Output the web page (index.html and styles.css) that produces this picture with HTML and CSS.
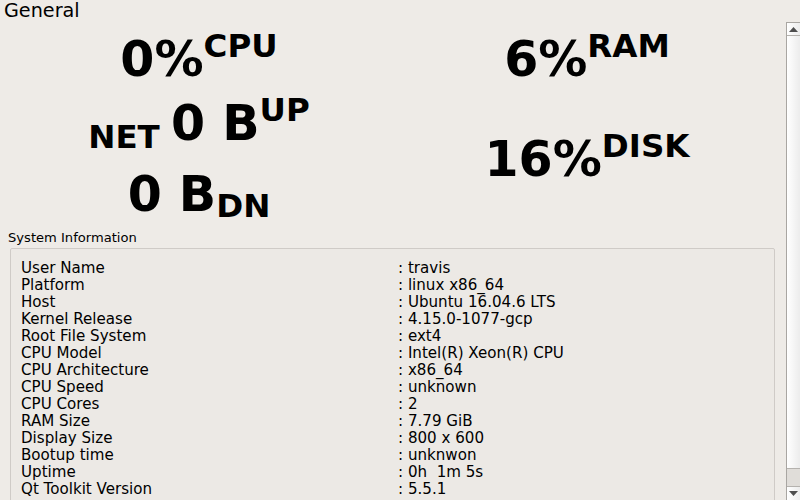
FILE: index.html
```html
<!DOCTYPE html>
<html>
<head>
<meta charset="utf-8">
<link rel="stylesheet" href="styles.css">
</head>
<body>
<div class="window">
  <div class="title">General</div>
  <div class="scroll">
    <div class="content">
      <div class="stats">
        <div class="col">
          <div class="big cpu">0%<span class="sup">CPU</span></div>
          <div class="big up"><span class="sub net">NET </span>0 B<span class="sup">UP</span></div>
          <div class="big dn">0 B<span class="sub dnl">DN</span></div>
        </div>
        <div class="col">
          <div class="big ram">6%<span class="sup">RAM</span></div>
          <div class="big disk">16%<span class="sup">DISK</span></div>
        </div>
      </div>
      <div class="group">
        <div class="group-title">System Information</div>
        <div class="frame">
          <div class="info">
            <div>User Name</div><div>: travis</div>
            <div>Platform</div><div>: linux x86_64</div>
            <div>Host</div><div>: Ubuntu 16.04.6 LTS</div>
            <div>Kernel Release</div><div>: 4.15.0-1077-gcp</div>
            <div>Root File System</div><div>: ext4</div>
            <div>CPU Model</div><div>: Intel(R) Xeon(R) CPU</div>
            <div>CPU Architecture</div><div>: x86_64</div>
            <div>CPU Speed</div><div>: unknown</div>
            <div>CPU Cores</div><div>: 2</div>
            <div>RAM Size</div><div>: 7.79 GiB</div>
            <div>Display Size</div><div>: 800 x 600</div>
            <div>Bootup time</div><div>: unknwon</div>
            <div>Uptime</div><div>: 0h&nbsp;&nbsp;1m 5s</div>
            <div>Qt Toolkit Version</div><div>: 5.5.1</div>
          </div>
        </div>
      </div>
    </div>
    <div class="scrollbar">
      <div class="sb-btn sb-up"><svg width="9" height="5" viewBox="0 0 9 5"><polygon points="0,5 9,5 4.5,0" fill="#4d4d4d"/></svg></div>
      <div class="sb-track"></div>
      <div class="sb-thumb"></div>
      <div class="sb-btn sb-down"><svg width="9" height="5" viewBox="0 0 9 5"><polygon points="0,0 9,0 4.5,5" fill="#4d4d4d"/></svg></div>
    </div>
  </div>
</div>
</body>
</html>
```
FILE: styles.css
```css
html, body {
  margin: 0;
  padding: 0;
  background: #eeebe7;
  overflow: hidden;
}
.window {
  width: 800px;
  height: 500px;
  font-family: "DejaVu Sans", sans-serif;
  color: #000;
  overflow: hidden;
}
.title {
  height: 22px;
  line-height: 22px;
  font-size: 19.2px;
  padding-left: 4px;
}
.scroll {
  display: flex;
  height: 478px;
}
.content {
  width: 786px;
  overflow: hidden;
}
.stats {
  height: 194px;
  padding: 14px 5px 0 5px;
  display: grid;
  grid-template-columns: 1fr 1fr;
}
.col {
  display: flex;
  flex-direction: column;
  align-items: center;
}
.big {
  font-weight: bold;
  font-size: 49px;
  line-height: 48px;
  height: 48px;
  white-space: nowrap;
}
.sup, .sub {
  font-size: 32.5px;
  line-height: 0;
}
.sup { vertical-align: 19px; }
.sub.net { vertical-align: -8px; }
.sub.dnl { vertical-align: -6px; }
.up { margin-top: 16px; }
.dn { margin-top: 23px; }
.disk { margin-top: 52px; }

.group-title {
  font-size: 13.1px;
  line-height: 15px;
  padding-left: 8px;
  margin-bottom: 3px;
}
.frame {
  margin-left: 10px;
  width: 765px;
  height: 300px;
  border: 1px solid #cfcbc7;
  border-radius: 2px;
  background: #ece9e5;
  padding: 11px 0 0 10px;
  box-sizing: border-box;
}
.info {
  display: grid;
  grid-template-columns: 377px 1fr;
  font-size: 15.1px;
  line-height: 17px;
  white-space: pre;
}
.scrollbar {
  width: 13px;
  border-left: 1px solid #a9a6a2;
  border-top: 1px solid #a9a6a2;
  display: flex;
  flex-direction: column;
  background: linear-gradient(to right, #ffffff, #ececec);
}
.sb-btn {
  display: flex;
  align-items: center;
  justify-content: center;
}
.sb-up {
  height: 12px;
  border-bottom: 1px solid #b5b2ae;
}
.sb-track {
  flex: 1;
}
.sb-thumb {
  height: 17px;
  border-top: 1px solid #b5b2ae;
  border-bottom: 1px solid #b5b2ae;
  background: #e0ddd9;
}
.sb-down {
  height: 13px;
}
```
